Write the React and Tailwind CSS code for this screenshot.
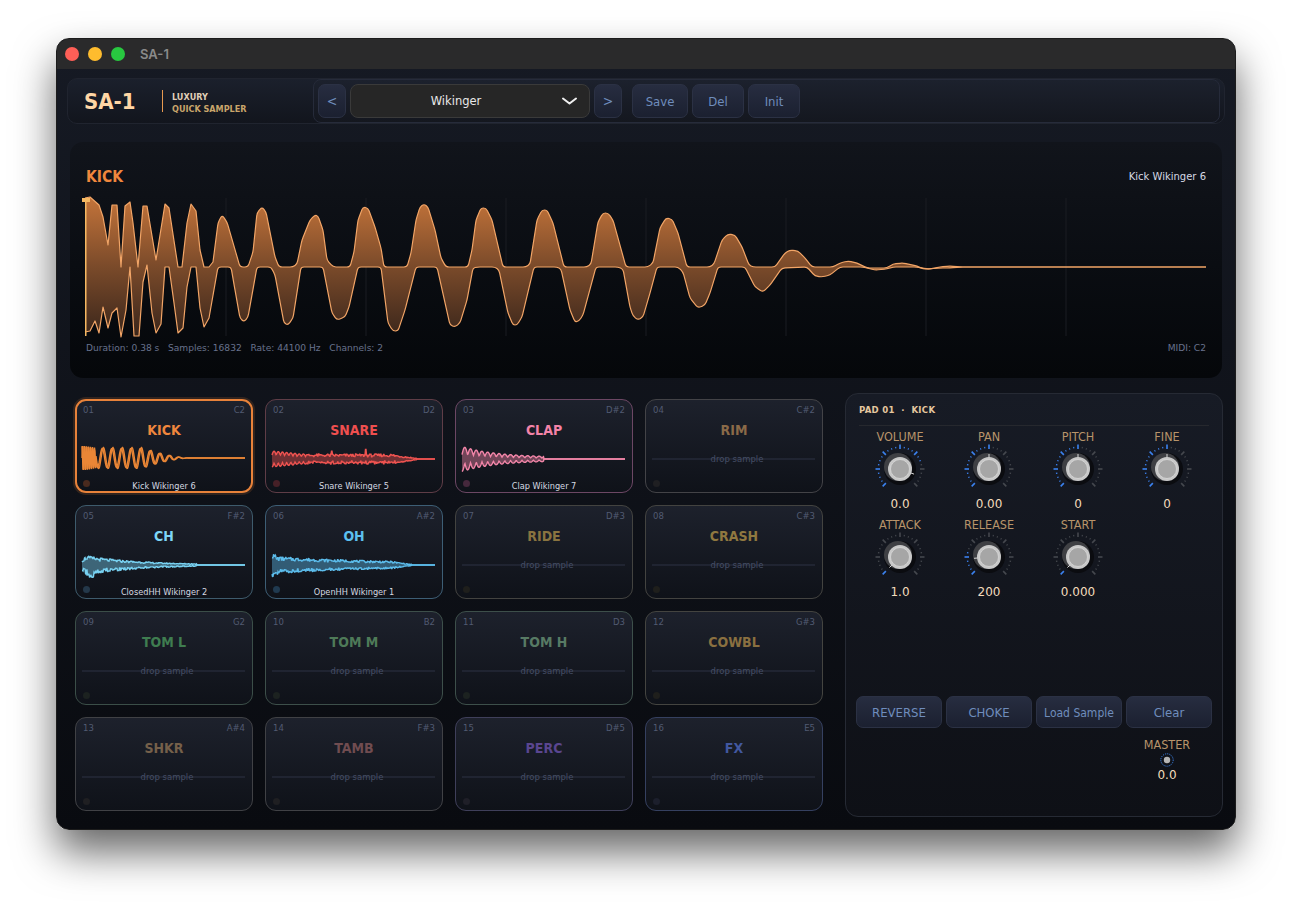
import React from "react";

const UPPER = [[85,198],[90,197],[99,205],[103,217],[108,245],[112,205],[117,205],[121,267],[125,206],[130,202],[133,223],[138,267],[143,206],[147,206],[156,260],[165,204],[169,208],[178,267],[182,267],[187,223],[191,204],[196,211],[200,250],[204,267],[209,267],[213,262],[218,223],[222,215],[227,222],[240,267],[248,267],[253,252],[257,213],[262,207],[266,212],[275,257],[279,267],[293,267],[297,264],[302,240],[310,220],[315,215],[318,216],[323,230],[327,260],[333,267],[350,267],[354,252],[358,220],[363,207],[368,208],[375,227],[381,248],[384,267],[407,267],[411,253],[416,220],[420,207],[424,204],[428,207],[435,230],[441,258],[446,267],[468,267],[472,250],[476,220],[481,208],[486,208],[492,220],[503,267],[526,267],[530,264],[537,220],[542,210],[547,210],[553,223],[564,267],[587,267],[591,264],[598,222],[603,213],[608,213],[613,220],[626,267],[648,267],[653,263],[660,228],[666,218],[672,219],[678,233],[687,267],[710,267],[714,264],[722,240],[728,234],[735,235],[742,247],[749,265],[753,267],[775,267],[785,253],[790,250],[798,251],[805,258],[812,267],[833,267],[840,263],[848,261],[857,263],[867,268],[887,268],[893,264],[903,263],[917,266],[923,269],[930,269],[940,267],[950,266],[960,267],[1206,267]];
const LOWER = [[85,332],[90,331],[95,321],[99,333],[103,307],[108,328],[112,313],[117,308],[121,337],[126,310],[130,267],[134,336],[139,336],[143,282],[147,265],[152,313],[156,333],[161,324],[165,267],[169,267],[174,303],[178,333],[183,328],[187,287],[191,267],[196,267],[200,308],[204,327],[209,318],[218,267],[231,267],[235,290],[240,318],[244,322],[248,317],[257,267],[271,267],[275,275],[284,323],[288,325],[293,318],[301,267],[323,267],[332,313],[337,320],[345,317],[349,307],[358,267],[381,267],[388,323],[393,331],[398,331],[405,310],[416,267],[437,267],[450,325],[455,327],[460,323],[467,300],[473,268],[477,267],[495,267],[499,270],[508,313],[513,325],[517,325],[522,317],[534,267],[557,267],[561,269],[570,310],[575,322],[579,321],[583,315],[596,267],[618,267],[623,269],[630,307],[633,316],[638,320],[643,317],[650,293],[657,267],[678,267],[683,272],[690,298],[698,308],[705,305],[710,293],[718,267],[745,267],[755,287],[763,292],[770,285],[782,268],[807,267],[815,276],[822,277],[830,275],[840,267],[863,267],[875,270],[887,269],[893,267],[917,267],[927,269],[940,268],[950,268],[960,267],[1206,267]];

const toPath = (pts) => pts.map((p, i) => `${i ? "L" : "M"}${p[0]} ${p[1]}`).join(" ");

// rounds the corners of the slower cycles, the first hits stay sharp
const smooth = (pts) => {
  let d = `M${pts[0][0]} ${pts[0][1]}`;
  for (let i = 1; i < pts.length - 1; i++) {
    const [x, y] = pts[i];
    if (x < 215) {
      d += ` L${x} ${y}`;
      continue;
    }
    const [px, py] = pts[i - 1];
    const [nx, ny] = pts[i + 1];
    const l1 = Math.hypot(x - px, y - py);
    const l2 = Math.hypot(nx - x, ny - y);
    const c1 = Math.min(3, l1 / 2) / l1;
    const c2 = Math.min(3, l2 / 2) / l2;
    d += ` L${x + (px - x) * c1} ${y + (py - y) * c1} Q${x} ${y} ${x + (nx - x) * c2} ${y + (ny - y) * c2}`;
  }
  const last = pts[pts.length - 1];
  return d + ` L${last[0]} ${last[1]}`;
};

// small repeatable noise so the pad waves stay the same on each load
const noise = (i, seed) => {
  const v = Math.sin(i * 12.9898 + seed * 78.233) * 43758.5453;
  return v - Math.floor(v);
};

const buildWave = (type) => {
  const w = 163;
  const up = [];
  const low = [];
  for (let x = 0; x <= w; x += 0.5) {
    let a = 0;
    let b = 0;
    if (type === "kick") {
      const amp = x < 14 ? 12 : x < 60 ? 10.5 : x < 108 ? 10.5 * Math.pow(1 - (x - 60) / 48, 1.6) : 0;
      if (x < 14) {
        a = amp * Math.sin(x * 3.1);
        b = -amp * Math.sin(x * 3.1 + 1.4);
      } else {
        a = amp * Math.sin(x * 0.66);
        b = -amp * 0.9 * Math.sin(x * 0.66 + 0.8);
      }
    } else if (type === "snare") {
      const amp = x < 145 ? (x < 25 ? 8 - x * 0.1 : 5 - (x > 120 ? (x - 120) * 0.17 : 0)) : 0;
      const xi = Math.round(x);
      const s = x < 35 ? 0.5 + 0.5 * Math.abs(Math.sin(x * 0.75)) : 0.45 + 0.55 * noise(xi, 2);
      a = amp * s + (xi === 94 ? 6 : 0) + (xi === 60 ? 3 : 0);
      b = amp * (x < 35 ? 0.5 + 0.5 * Math.abs(Math.cos(x * 0.75)) : 0.4 + 0.6 * noise(xi, 3));
    } else if (type === "clap") {
      const amp = x < 82 ? 11 * Math.exp(-x / 36) + 1.5 : 0;
      a = amp * (0.35 + 0.65 * Math.abs(Math.sin(x * 0.55)));
      b = amp * (0.35 + 0.65 * Math.abs(Math.cos(x * 0.55)));
    } else if (type === "ch") {
      const xi = Math.round(x);
      const amp = x < 115 ? 10 * Math.exp(-x / 55) * (x < 4 ? 0.5 + x * 0.12 : 1) : 0;
      a = amp * (0.55 + 0.45 * noise(xi, 5));
      b = amp * (0.5 + 0.6 * noise(xi, 6)) + (x > 5 && x < 12 ? 4 : 0);
    } else {
      const xi = Math.round(x);
      const amp = x < 140 ? 8 * Math.exp(-x / 130) * (x > 120 ? (140 - x) / 20 : 1) + 0.6 : 0;
      a = amp * (0.55 + 0.45 * noise(xi, 7)) + (x < 4 ? 2 : 0);
      b = amp * (0.55 + 0.45 * noise(xi, 8)) + (x < 6 ? 3 : 0);
    }
    up.push([x, 16 - a]);
    low.push([x, 16 + b]);
  }
  return { up, low };
};

const Wave = ({ type, color }) => {
  if (!type) {
    return (
      <svg className="block w-[163px] h-[32px]" viewBox="0 0 163 32">
        <line x1="0" y1="16" x2="163" y2="16" stroke="#252a38" strokeWidth="1.4" />
      </svg>
    );
  }
  const { up, low } = buildWave(type);
  const outline = toPath(up) + " " + toPath([...low].reverse()).replace("M", "L") + " Z";
  return (
    <svg className="block w-[163px] h-[32px] overflow-visible" viewBox="0 0 163 32">
      <path d={outline} fill={color} fillOpacity="0.42" />
      <path d={toPath(up)} fill="none" stroke={color} strokeWidth="1.4" />
      <path d={toPath(low)} fill="none" stroke={color} strokeWidth="1.4" />
    </svg>
  );
};

const pads = [
  { id: "01", note: "C2", name: "KICK", text: "text-[#f0873d]", border: "border-[#e8823a]", sample: "Kick Wikinger 6", wave: "kick", color: "#ea8636", dot: "bg-[#4a2a1e]", active: true },
  { id: "02", note: "D2", name: "SNARE", text: "text-[#ef4f4f]", border: "border-[#5f3d47]", sample: "Snare Wikinger 5", wave: "snare", color: "#ef5350", dot: "bg-[#462027]" },
  { id: "03", note: "D#2", name: "CLAP", text: "text-[#f383a8]", border: "border-[#6c4764]", sample: "Clap Wikinger 7", wave: "clap", color: "#f285a8", dot: "bg-[#45283c]" },
  { id: "04", note: "C#2", name: "RIM", text: "text-[#8a6a48]", border: "border-[#434347]", dot: "bg-[#1f1f22]" },
  { id: "05", note: "F#2", name: "CH", text: "text-[#7ed6f7]", border: "border-[#3e5b6c]", sample: "ClosedHH Wikinger 2", wave: "ch", color: "#78d2f2", dot: "bg-[#24384a]" },
  { id: "06", note: "A#2", name: "OH", text: "text-[#5cc0f0]", border: "border-[#3d5e75]", sample: "OpenHH Wikinger 1", wave: "oh", color: "#5cbdec", dot: "bg-[#203a50]" },
  { id: "07", note: "D#3", name: "RIDE", text: "text-[#8a7440]", border: "border-[#434340]", dot: "bg-[#1f1f1c]" },
  { id: "08", note: "C#3", name: "CRASH", text: "text-[#8f7840]", border: "border-[#434340]", dot: "bg-[#1f1f1c]" },
  { id: "09", note: "G2", name: "TOM L", text: "text-[#3f7d50]", border: "border-[#3b4e48]", dot: "bg-[#1c2220]" },
  { id: "10", note: "B2", name: "TOM M", text: "text-[#4e7a58]", border: "border-[#3d4f4a]", dot: "bg-[#1c2220]" },
  { id: "11", note: "D3", name: "TOM H", text: "text-[#577a64]", border: "border-[#3d4f4a]", dot: "bg-[#1c2220]" },
  { id: "12", note: "G#3", name: "COWBL", text: "text-[#8a7040]", border: "border-[#444440]", dot: "bg-[#1f1f1c]" },
  { id: "13", note: "A#4", name: "SHKR", text: "text-[#75604a]", border: "border-[#404145]", dot: "bg-[#1f1f22]" },
  { id: "14", note: "F#3", name: "TAMB", text: "text-[#704c50]", border: "border-[#404145]", dot: "bg-[#1f1f22]" },
  { id: "15", note: "D#5", name: "PERC", text: "text-[#5a4690]", border: "border-[#3f3f5a]", dot: "bg-[#1f1f28]" },
  { id: "16", note: "E5", name: "FX", text: "text-[#4258a0]", border: "border-[#354060]", dot: "bg-[#1c1f2c]" },
];

const cond = "font-['DejaVu_Sans_Condensed','DejaVu_Sans',sans-serif]";

const Pad = ({ pad }) => (
  <div
    className={`relative h-[94px] rounded-[11px] border bg-gradient-to-b from-[#1d212c] to-[#0f1219] ${pad.border} ${
      pad.active ? "border-2 shadow-[0_0_0_2px_rgba(232,130,58,0.16)]" : ""
    }`}
  >
    <div className={`flex justify-between text-[8.5px] leading-[10px] text-[#525b72] ${pad.active ? "px-[6px] pt-[4px]" : "px-[7px] pt-[5px]"}`}>
      <span>{pad.id}</span>
      <span>{pad.note}</span>
    </div>
    <div className={`text-center text-[14px] leading-[16px] font-bold ${cond} ${pad.text} mt-[7px]`}>{pad.name}</div>
    <div className={`relative ${pad.active ? "ml-[5px] mt-[4px]" : "ml-[6px] mt-[5px]"}`}>
      <Wave type={pad.wave} color={pad.color} />
      {!pad.wave && (
        <div className="absolute inset-0 flex items-center justify-center text-[8.5px] text-[#454e66]">drop sample</div>
      )}
    </div>
    {pad.sample && (
      <div className={`absolute left-0 right-0 text-center text-[8.2px] leading-[12px] text-[#d5d9e2] ${pad.active ? "-bottom-[1px]" : "bottom-0"}`}>{pad.sample}</div>
    )}
    <span className={`absolute w-[7px] h-[7px] rounded-full ${pad.dot} ${pad.active ? "left-[6px] bottom-[4px]" : "left-[7px] bottom-[5px]"}`} />
  </div>
);

const Knob = ({ value, angle, label, val }) => {
  const ticks = [];
  for (let i = 0; i <= 24; i++) {
    const a = -135 + i * 11.25;
    const major = i % 4 === 0;
    const rad = ((a - 90) * Math.PI) / 180;
    const r1 = major ? 20 : 21;
    const r2 = major ? 24.5 : 22.5;
    ticks.push(
      <line
        key={i}
        x1={30 + r1 * Math.cos(rad)}
        y1={30 + r1 * Math.sin(rad)}
        x2={30 + r2 * Math.cos(rad)}
        y2={30 + r2 * Math.sin(rad)}
        stroke={a <= value ? "#3b82f0" : "#45484e"}
        strokeWidth={major ? 1.6 : 1.1}
      />
    );
  }
  const p = ((angle - 90) * Math.PI) / 180;
  return (
    <div className="flex flex-col items-center pr-[1px]">
      <div className={`h-[14px] text-[12.5px] leading-[12px] text-[#b8946a] ${cond}`}>{label}</div>
      <svg className="block w-[60px] h-[60px] -my-[6px]" viewBox="0 0 60 60">
        {ticks}
        <circle cx="30" cy="30" r="16" fill="#0b0c10" />
        <circle cx="28" cy="28" r="14" fill="#3f4044" />
        <circle cx="30" cy="30" r="12" fill="#c8c8c8" />
        <circle cx="30" cy="30" r="9.5" fill="#a6a6a6" stroke="#dcdcdc" strokeWidth="0.7" />
        <line x1={30 + 11.5 * Math.cos(p)} y1={30 + 11.5 * Math.sin(p)} x2={30 + 15 * Math.cos(p)} y2={30 + 15 * Math.sin(p)} stroke="#d8d8d8" strokeWidth="1" />
      </svg>
      <div className="mt-[4px] h-[14px] text-[12px] leading-[14px] text-[#f3dcbd]">{val}</div>
    </div>
  );
};

const btn = `flex items-center justify-center pt-[1px] rounded-[7px] border border-[#2b3144] bg-gradient-to-b from-[#272d40] to-[#1b2030] text-[#6f8dbd] ${cond}`;

export default function App() {
  const grid = [226, 366, 506, 646, 786, 926, 1066];
  return (
    <div className="w-[1292px] h-[904px] bg-white overflow-hidden pt-[38px] pl-[56px]" style={{ fontFamily: '"DejaVu Sans", sans-serif' }}>
      <div className="w-[1180px] h-[792px] rounded-[13px] overflow-hidden flex flex-col border border-[#1c1c1c] bg-gradient-to-b from-[#161a24] to-[#090b10] shadow-[0_22px_42px_rgba(0,0,0,0.6)]">
        {/* title bar */}
        <div className="h-[30px] shrink-0 flex items-center bg-[#2a2a2b] pl-[8px]">
          <span className="w-[14px] h-[14px] rounded-full bg-[#fe5f57]" />
          <span className="ml-[9px] w-[14px] h-[14px] rounded-full bg-[#febc2e]" />
          <span className="ml-[9px] w-[14px] h-[14px] rounded-full bg-[#28c840]" />
          <span className="ml-[15px] pt-[1px] text-[13px] font-semibold text-[#8a8a8a]" style={{ fontFamily: "Inter, sans-serif" }}>SA-1</span>
        </div>

        <div className="flex-1 flex flex-col px-[10px] pt-[9px]">
          {/* header */}
          <div className="h-[46px] flex rounded-[10px] border border-[#20242f] bg-gradient-to-b from-[#1b202c] to-[#12151d]">
            <div className="w-[245px] flex items-center pl-[16px]">
              <div className={`w-[78px] text-[22px] font-bold text-[#ffd6a5] ${cond}`}>SA-1</div>
              <div className="h-[22px] w-px bg-[#e89a50]" />
              <div className={`ml-[9px] pt-[3px] text-[9px] leading-[12px] font-bold ${cond}`}>
                <div className="text-[#e0cfb8]">LUXURY</div>
                <div className="text-[#c9a56b]">QUICK SAMPLER</div>
              </div>
            </div>
            <div className="flex-1 mr-[4px] flex items-center gap-[4px] pl-[4px] rounded-[8px] border border-[#262b3a] bg-gradient-to-b from-[#1c212d] to-[#14171f]">
              <div className={`${btn} w-[28px] h-[34px] text-[14px]`}>&lt;</div>
              <div className="w-[240px] h-[34px] relative flex items-center justify-center pt-[1px] pr-[28px] rounded-[8px] border border-[#3a3a3a] bg-[#262626] text-[11.5px] text-[#e8e8e8]">
                Wikinger
                <svg className="absolute right-[12px] top-[12px] w-[15px] h-[9px]" viewBox="0 0 15 9" fill="none" stroke="#eeeeee" strokeWidth="2" strokeLinecap="round" strokeLinejoin="round">
                  <path d="M1 1.5 L7.5 6.5 L14 1.5" />
                </svg>
              </div>
              <div className={`${btn} w-[28px] h-[34px] text-[14px]`}>&gt;</div>
              <div className={`${btn} w-[56px] h-[34px] text-[13px] ml-[6px]`}>Save</div>
              <div className={`${btn} w-[52px] h-[34px] text-[13px]`}>Del</div>
              <div className={`${btn} w-[52px] h-[34px] text-[13px]`}>Init</div>
            </div>
          </div>

          {/* main waveform */}
          <div className="mt-[18px] mx-[3px] h-[236px] rounded-[13px] flex flex-col bg-gradient-to-b from-[#11141b] to-[#05070a]">
            <div className="mt-[25px] h-[18px] px-[16px] flex items-center justify-between">
              <span className={`pt-[3px] text-[15.5px] font-bold text-[#f0873d] ${cond}`}>KICK</span>
              <span className="text-[10px] text-[#d5d9e4]">Kick Wikinger 6</span>
            </div>
            <svg className="block mt-[7px] w-[1152px] h-[148px] shrink-0" viewBox="70 192 1152 148">
              <defs>
                <linearGradient id="waveFill" gradientUnits="userSpaceOnUse" x1="0" y1="197" x2="0" y2="337">
                  <stop offset="0" stopColor="#c4743a" />
                  <stop offset="0.5" stopColor="#7a4a2a" />
                  <stop offset="1" stopColor="#3a261b" />
                </linearGradient>
              </defs>
              {grid.map((x) => (
                <line key={x} x1={x} y1="198" x2={x} y2="336" stroke="#1a1d23" strokeWidth="1" />
              ))}
              <path d={smooth(UPPER) + " " + smooth([...LOWER].reverse()).replace("M", "L") + " Z"} fill="url(#waveFill)" />
              <path d={smooth(UPPER)} fill="none" stroke="#f2a567" strokeWidth="1.2" strokeLinejoin="round" />
              <path d={smooth(LOWER)} fill="none" stroke="#f2a567" strokeWidth="1.2" strokeLinejoin="round" />
              <rect x="85" y="198" width="1.5" height="138" fill="#f5b862" />
              <rect x="82" y="198" width="8" height="4" fill="#f5b862" />
            </svg>
            <div className="mt-[2px] px-[16px] flex justify-between text-[9.1px] leading-[12px] text-[#68728c]">
              <span className="whitespace-pre">{"Duration: 0.38 s   Samples: 16832   Rate: 44100 Hz   Channels: 2"}</span>
              <span>MIDI: C2</span>
            </div>
          </div>

          {/* pads + controls */}
          <div className="mt-[15px] flex mr-[1px]">
            <div className="ml-[8px] mt-[6px] w-[748px] h-[412px] grid grid-cols-4 grid-rows-4 gap-[12px]">
              {pads.map((p) => (
                <Pad key={p.id} pad={p} />
              ))}
            </div>
            <div className="ml-[22px] w-[378px] h-[424px] rounded-[13px] border border-[#262a34] bg-gradient-to-b from-[#171b25] to-[#0e1016] px-[10px]">
              <div className={`mx-[3px] mt-[10px] h-[22px] border-b border-[#26282e] text-[9.5px] leading-[12px] tracking-[0.3px] font-bold text-[#e5c79f] whitespace-pre ${cond}`}>{"PAD 01  ·  KICK"}</div>
              <div className="mt-[5px] grid grid-cols-4 gap-y-[8px]">
                <Knob label="VOLUME" val="0.0" value={70} angle={110} />
                <Knob label="PAN" val="0.00" value={0} angle={0} />
                <Knob label="PITCH" val="0" value={0} angle={0} />
                <Knob label="FINE" val="0" value={0} angle={0} />
                <Knob label="ATTACK" val="1.0" value={-135} angle={-135} />
                <Knob label="RELEASE" val="200" value={-70} angle={-95} />
                <Knob label="START" val="0.000" value={-135} angle={-135} />
              </div>
              <div className="mt-[97px] grid grid-cols-4 gap-[4px] text-[13px]">
                <div className={`${btn} h-[32px]`}>REVERSE</div>
                <div className={`${btn} h-[32px]`}>CHOKE</div>
                <div className={`${btn} h-[32px] text-[12px]`}>Load Sample</div>
                <div className={`${btn} h-[32px]`}>Clear</div>
              </div>
              <div className="mt-[10px] ml-auto w-[89px] flex flex-col items-center pr-[1px]">
                <div className={`text-[12.5px] leading-[14px] text-[#b8946a] ${cond}`}>MASTER</div>
                <svg className="block w-[16px] h-[16px]" viewBox="0 0 16 16">
                  <circle cx="8" cy="8" r="6.2" fill="none" stroke="#3b82e6" strokeWidth="1" strokeDasharray="1.2 1" />
                  <circle cx="8" cy="8" r="3.2" fill="#b5b5b5" />
                </svg>
                <div className="text-[12px] leading-[14px] text-[#f3dcbd]">0.0</div>
              </div>
            </div>
          </div>
        </div>
      </div>
    </div>
  );
}
